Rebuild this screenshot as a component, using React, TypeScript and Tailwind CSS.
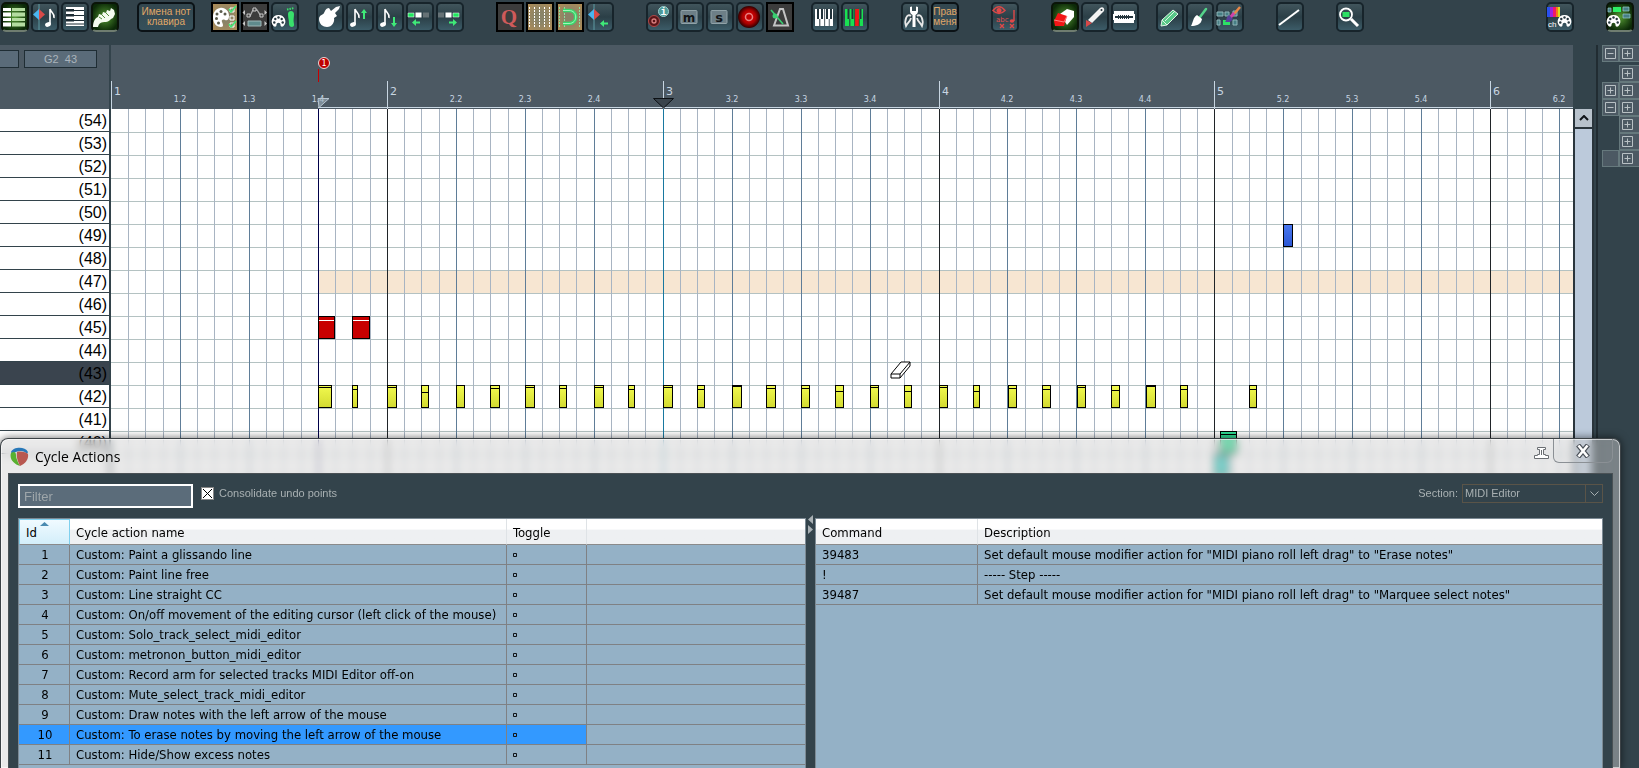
import { ReactNode } from "react"
import clsx from "clsx"

type Tone = "plain" | "green" | "amber" | "dark"

const tones: Record<Tone, string> = {
    plain: "rounded-[5px] border-[#17242b] bg-linear-to-b from-[#41555c] via-[#2b3f47] to-[#3c5c68]",
    green: "rounded-[5px] border-[#0a1408] border-b-[#6f7d70] bg-radial from-[#569c34] to-[#0c2a08] to-80%",
    amber: "border-black bg-radial from-[#8a8468] from-30% to-[#b08c54]",
    dark: "border-black bg-[#3c3c3c]",
}

const Tool = ({ label, tone = "plain", children }: { label: string, tone?: Tone, children: ReactNode }) => (
    <button aria-label={label} className={clsx("relative mx-px h-[30px] w-7 shrink-0 border-2", tones[tone])}>
        <svg className=" absolute -inset-0.5 h-[30px] w-7 overflow-visible " viewBox="1 2 28 30">{children}</svg>
    </button>
)

const TextTool = ({ children, className }: { children: ReactNode, className: string }) => (
    <button className={clsx("mx-px h-[30px] shrink-0 rounded-[5px] border-2 border-[#0b1216] bg-linear-to-b from-[#33474f] to-[#36505a] text-center font-['Liberation_Sans'] text-[10px] leading-[10px] whitespace-nowrap text-[#e0a868]", className)}>
        {children}
    </button>
)

const Palette = ({ x, y, s = 1 }: { x: number, y: number, s?: number }) => (
    <g transform={`translate(${x} ${y}) scale(${s})`}>
        <path fill="#fff" d="M7 0C2 1 0 5 0 9c0 6 3 10 8 10 3 0 2-3 1-5s1-3 3-2 4 0 4-4c0-5-4-9-9-8Z" />
        <g fill="#5b5b4c">
            <circle cx="4" cy="6" r="1.5" /><circle cx="8" cy="3.500" r="1.500" /><circle cx="12" cy="6" r="1.500" />
            <circle cx="3.500" cy="10.500" r="1.500" /><circle cx="5.500" cy="15" r="1.500" />
        </g>
    </g>
)

// round palette with the holes set in a ring
const Wheel = ({ x, y }: { x: number, y: number }) => (
    <g transform={`translate(${x} ${y})`}>
        <path fill="#fff" d="M6.500 0a6.500 6.500 0 0 1 5 11c-1 1-3 1-3-1 0-3-4-3-4 0 0 2-2 2-3 1a6.500 6.500 0 0 1 5-11Z" />
        <g fill="#26363e">
            <circle cx="6.500" cy="2.500" r="1.200" /><circle cx="3.300" cy="4" r="1.200" /><circle cx="9.700" cy="4" r="1.200" />
            <circle cx="2.300" cy="7.500" r="1.200" /><circle cx="10.700" cy="7.500" r="1.200" />
        </g>
    </g>
)

const EighthNote = ({ x = 0 }: { x?: number }) => (
    <g transform={`translate(${x} 0)`}>
        <path d="M8 9v15M8 9c1 4 5 4 4 9" fill="none" stroke="#fff" strokeWidth="1.600" />
        <ellipse cx="6" cy="24.500" rx="3" ry="2.200" fill="#fff" transform="rotate(-20 6 24.500)" />
    </g>
)

const Diamond = ({ x }: { x: number }) => (
    <g>
        <path d={`M${x} 4v26`} stroke="#5f9ba3" />
        <path d={`M${x} 9v11l-6-5.500Z`} fill="#4ab4f0" />
        <path d={`M${x} 9v11l6-5.500Z`} fill="#d84a48" />
    </g>
)

const GREEN = "#3fea78"

const ArrowLeft = ({ x, y }: { x: number, y: number }) => (
    <path transform={`translate(${x} ${y})`} fill={GREEN} d="M0 3.500 4 0v2.500h4v2H4V7Z" />
)
const ArrowRight = ({ x, y }: { x: number, y: number }) => (
    <path transform={`translate(${x} ${y})`} fill={GREEN} d="M8 3.500 4 0v2.500H0v2h4V7Z" />
)

const Toolbar = () => (
    <div className=" flex h-[45px] w-full pt-0.5 ">
        <Tool label="Piano roll view" tone="green">
            <path fill="#fff" d="M3 8h8v3H3zM3 12.500h8v4H3zM3 18h8v3H3zM3 22.500h8v4H3z" />
            <path fill="#b4dca0" d="M12 8h13v3H12zM12 12.500h13v4H12zM12 18h13v3H12zM12 22.500h13v4H12z" />
        </Tool>
        <Tool label="Cursor and note"><Diamond x={9} /><EighthNote x={12} /></Tool>
        <Tool label="Keys">
            <path fill="#fff" d="M6 7h18v19H6z" />
            <path fill="#1c2b33" d="M6 9h8v2.500H6zM6 14h8v2.500H6zM6 19h8v2.500H6zM14 10h10v1H14zM14 15h10v1H14zM14 20h10v1H14zM6 23.500h18v1H6z" />
        </Tool>
        <Tool label="Guitar neck" tone="green">
            <path fill="#f4fbef" d="M3 27c0-5 2-9 5-10l1-3 3 1 1-3 3 1 1-3 3 1 1-3 3 2 1 4-2 4c-3 1-4 4-7 4-5 0-7 1-8 5Z" />
            <path stroke="#4f8a38" d="m9 17 3 2m0-4 3 3m1-5 3 3" />
        </Tool>
        <TextTool className="ml-[17px] w-[58px]">Имена нот<br />клавира</TextTool>
        <div className=" flex pl-[14px] ">
            <Tool label="Colour list" tone="amber">
                <Palette x={3} y={8} />
                <g fill="none" stroke="#fff"><path d="M20 8h4v4h-4zM20 16h4v4h-4zM20 23h4v4h-4z" /></g>
                <path d="m19 9 2 3 5-6M19 24l2 3 5-6" fill="none" stroke={GREEN} strokeWidth="1.500" />
            </Tool>
            <Tool label="Envelope" tone="dark">
                <path d="M7 16h3l3-6h4l4 6h2" fill="none" stroke="#aaa" strokeWidth="1.300" />
                <path fill="#3c3c3c" stroke="#c8c8c8" d="M13 8h3v3h-3zM7 14h3v3H7zM20 14h3v3h-3z" />
                <path fill="#5f8a8c" stroke="#9fb5b5" d="M8 21h13v5H8z" />
                <path fill="#c8c8c8" d="M5 10v5l-2.500-2.500ZM24.500 10v5l2.500-2.500ZM5 21v5l-2.500-2.500ZM24.500 21v5l2.500-2.500Z" />
            </Tool>
            <Tool label="Colour step">
                <Wheel x={2} y={15} />
                <path fill="#39e06c" d="M18 14c0-4 6-4 6 0 0 4-1 6 0 10s-5 4-5 0c0-4-1-6-1-10Z" />
                <path stroke="#39e06c" strokeWidth="2" strokeDasharray="1.500 1" d="M17 9.500 24 8" />
            </Tool>
        </div>
        <div className=" flex pl-[15px] ">
            <Tool label="Guitar">
                <path fill="#fff" d="M4 19c0-4 4-4 5-6s2-5 5-5l2 3 5-4 4-1-1 3-4 4 2 3-3 2c1 4-2 9-7 9-4 0-8-3-8-8Z" />
            </Tool>
            <Tool label="Note up"><EighthNote x={2} /><path fill={GREEN} d="m19 9 3 4h-2v6h-2v-6h-2Z" /></Tool>
            <Tool label="Note down"><EighthNote x={2} /><path fill={GREEN} d="m19 27-3-4h2v-6h2v6h2Z" /></Tool>
            <Tool label="Shift left">
                <path fill="#20e860" stroke="#fff" strokeWidth=".5" d="M3 13h6v4H3z" /><path fill="#fff" d="M10.500 12.500h6v5h-6z" /><path fill="#667276" d="M18 12.500h6v5h-6z" />
                <ArrowLeft x={7} y={19} />
            </Tool>
            <Tool label="Shift right">
                <path fill="#667276" d="M3 12.500h6v5H3z" /><path fill="#fff" d="M10.500 12.500h6v5h-6z" /><path fill="#20e860" stroke="#fff" strokeWidth=".5" d="M18 13h6v4h-6z" />
                <ArrowRight x={14} y={19} />
            </Tool>
        </div>
        <div className=" flex pl-[30px] ">
            <Tool label="Quantize" tone="dark">
                <text x="14" y="24" textAnchor="middle" fontFamily="Liberation Serif" fontWeight="bold" fontSize="21" fill="#cf5a5a">Q</text>
            </Tool>
            <Tool label="Show grid" tone="amber">
                <path stroke="#fff" strokeDasharray="2 1" d="M4.500 7v20M9.500 7v20M14.500 7v20M19.500 7v20M24.500 7v20" />
            </Tool>
            <Tool label="Snap" tone="amber">
                <path stroke="#8fe0a0" strokeDasharray="2 1" d="M4.500 7v20M9.500 7v20M24.500 7v20" />
                <path d="M8 10.500h6c9 0 9 13 0 13H8" fill="none" stroke="#36d96a" strokeWidth="3.500" />
                <path d="M8 10.500h6c9 0 9 13 0 13H8" fill="none" stroke="#a5f5ba" />
            </Tool>
            <Tool label="Move to cursor"><Diamond x={9} /><ArrowLeft x={15} y={20} /></Tool>
        </div>
        <div className=" flex pl-[30px] ">
            <Tool label="Arm info">
                <circle cx="9" cy="21" r="5.500" fill="#5a1518" stroke="#b04848" /><circle cx="9" cy="21" r="2" fill="none" stroke="#d98080" strokeWidth="1.300" />
                <circle cx="18.500" cy="11.500" r="5" fill="#4d9a98" stroke="#9bd0ce" />
                <text x="18.500" y="15" textAnchor="middle" fontFamily="Liberation Mono" fontWeight="bold" fontSize="10" fill="#fff">i</text>
            </Tool>
            <Tool label="Mute">
                <rect x="6" y="10.500" width="16" height="13" rx="1" fill="#6d7f87" stroke="#90a2a8" />
                <text x="14" y="22" textAnchor="middle" fontFamily="DejaVu Sans" fontWeight="bold" fontSize="12" fill="#101518">m</text>
            </Tool>
            <Tool label="Solo">
                <rect x="6" y="10.500" width="16" height="13" rx="1" fill="#6d7f87" stroke="#90a2a8" />
                <text x="14" y="22" textAnchor="middle" fontFamily="DejaVu Sans" fontWeight="bold" fontSize="13" fill="#101518">s</text>
            </Tool>
            <Tool label="Record">
                <defs>
                    <radialGradient id="rec"><stop stopColor="#e80808" /><stop offset=".6" stopColor="#b00000" /><stop offset="1" stopColor="#300000" /></radialGradient>
                </defs>
                <circle cx="14" cy="17" r="11" fill="url(#rec)" />
                <circle cx="14" cy="17" r="3.500" fill="#c00000" stroke="#e88080" strokeWidth="1.500" />
            </Tool>
            <Tool label="Metronome" tone="dark">
                <path d="M9 25.500 15 9h3l5 16.500Z" fill="none" stroke="#c4c4c4" strokeWidth="2" />
                <path d="m6 10 12 14" stroke="#39d070" strokeWidth="1.600" /><circle cx="10" cy="16" r="2.500" fill="#39d070" />
            </Tool>
        </div>
        <div className=" flex pl-[15px] ">
            <Tool label="Keyboard">
                <path fill="#fff" d="M5 9h18v17H5z" />
                <path fill="#22333b" d="M7 9h2v10H7zM11 9h2v10h-2zM16 9h2v10h-2zM20 9h2v10h-2zM9.300 19h1v7h-1zM14.300 9h.8v17h-.8zM18.800 19h.8v7h-.8z" />
            </Tool>
            <Tool label="Coloured keyboard">
                <path fill="#19e052" d="M5 9h18v17H5z" /><path fill="#f01818" d="M15 9h4v17h-4z" />
                <path fill="#22333b" d="M7.500 9h2v10h-2zM11.500 9h2v10h-2zM19.500 9h2v10h-2zM9.300 19h1v7h-1zM14.300 9h.8v17h-.8zM18.800 19h.8v7h-.8z" />
            </Tool>
        </div>
        <div className=" flex pl-[30px] ">
            <Tool label="Options">
                <path fill="#fff" d="M10 7v4c0 2 1 3 2.500 4v12h3V15c1.500-1 2.500-2 2.500-4V7l-2-.5V11h-4V6.500Z" />
                <path fill="none" stroke="#e8e8e8" strokeWidth="1.800" d="M11 16c-4-3-7 4-5 10 2-4 4-4 5-8m6-2c4-3 7 4 5 10-2-4-4-4-5-8" />
            </Tool>
            <TextTool className="w-7">Прав<br />меня</TextTool>
        </div>
        <div className=" flex pl-[30px] ">
            <Tool label="Hide names">
                <path d="M3 10.500c4-5 8-5 12 0-4 4-8 4-12 0Z" fill="none" stroke="#d84848" strokeWidth="1.500" /><circle cx="9" cy="10.500" r="2.500" fill="#e04848" />
                <text x="6" y="22" fontFamily="DejaVu Sans" fontSize="7" fill="#e05050">abc</text>
                <path d="M24 10v11m-14 3 4 4m0-4-4 4m10-4 4 4m0-4-4 4" stroke="#e04848" strokeWidth="1.400" /><ellipse cx="22" cy="21" rx="2.300" ry="1.700" fill="#e04848" />
            </Tool>
        </div>
        <div className=" flex pl-[30px] ">
            <Tool label="Eraser" tone="green">
                <path fill="#fff" d="m10 14 7-5 7 2v6l-7 8Z" /><path fill="#f21616" d="m8 13 9 3-3 10H5l-1-5Z" /><path stroke="#ff8080" d="m4 20 10 2 3-6" fill="none" />
            </Tool>
            <Tool label="Knife">
                <path fill="#f3f3f3" d="M8 20 20 8c3-2 5 1 4 3L12 23Z" /><path fill="#d84848" d="m6 20 6 3-6 4Z" /><circle cx="21.500" cy="10" r="1" fill="#26363e" />
            </Tool>
            <Tool label="Razor">
                <path fill="#fff" d="M4 11h20v3h1v6h-1v3H4v-3H3v-6h1Z" />
                <path stroke="#26363e" strokeWidth="2" d="M5 17h18" /><path stroke="#26363e" strokeWidth="4" strokeDasharray="1 1" d="M8 17h12" />
            </Tool>
        </div>
        <div className=" flex pl-[15px] ">
            <Tool label="Pencil">
                <path fill="#58c888" stroke="#dff5e6" d="m7 20 11-10 5 4-11 11-6 1Z" /><path stroke="#dff5e6" d="m10 21 10-10M7 20l5 5" />
            </Tool>
            <Tool label="Brush">
                <path d="m15 17 6-8" stroke="#54d48a" strokeWidth="2.500" strokeLinecap="round" /><path fill="#fff" d="m12 15 5 4c-1 6-6 7-11 7 2-3 2-9 6-11Z" />
            </Tool>
            <Tool label="Paint notes">
                <path fill="#477f85" stroke="#8fb5b8" d="M2 12h6v4H2zM10 12h4v4h-4zM18 11h4v5h-4zM2 20h3v5H2zM18 20h4v5h-4z" /><path fill="#2de065" d="M8 20h7v5H8z" />
                <path d="m19 14 6-7" stroke="#e88848" strokeWidth="2.500" /><path d="m15 18 4-5" stroke="#d040a8" strokeWidth="3" /><path fill="#584098" d="m14 15 4 4c-2 4-5 3-8 3 2-2 1-5 4-7Z" />
            </Tool>
        </div>
        <div className=" flex pl-[30px] ">
            <Tool label="Line"><path d="M4 25 24 10" stroke="#fff" strokeWidth="2" /></Tool>
        </div>
        <div className=" flex pl-[30px] ">
            <Tool label="Zoom">
                <circle cx="11" cy="14.500" r="6" fill="none" stroke="#fff" strokeWidth="1.800" /><path fill="#2de065" d="M7.500 12h7v5h-7z" /><path d="m16 19 7 7" stroke="#fff" strokeWidth="3" />
            </Tool>
        </div>
        <div className=" ml-auto flex gap-[30px] pr-1 ">
            <Tool label="Channel colours">
                <path fill="#2a50f0" d="M2 7h4v10H2z" /><path fill="#a020e0" d="M5 7h3v10H5z" /><path fill="#f01868" d="M8 7h3v10H8z" /><path fill="#f87818" d="M11 7h3v10h-3z" /><path fill="#d8e020" d="M13 7h2v10h-2z" />
                <Wheel x={13} y={15} />
                <text x="3" y="27" fontFamily="Liberation Sans" fontSize="8" fill="#fff">ch</text>
            </Tool>
            <Tool label="Track colours" tone="green">
                <path fill="#477f85" stroke="#9cc" strokeWidth=".7" d="M3 8h3v4H3zM18 7h6v4h-6zM18 14h7v4h-7z" /><path fill="#2df065" d="M8 7h8v5H8z" />
                <Wheel x={2} y={15} />
            </Tool>
        </div>
    </div>
)

const STEP = 17.24
const ROW = 23
const START = 207

const xAt = (i: number) => Math.round(i * STEP)

const ticks = Array.from({ length: 140 }, (_, i) => i)

const labelled = ticks.filter(i => i % 4 === 0 && i < 85)

const Ruler = () => (
    <svg className=" block h-16 w-full bg-[#4c5963] font-['DejaVu_Sans'] " shapeRendering="crispEdges">
        {labelled.map(i => {
            const measure = i / 16 + 1
            if (i % 16 === 0) {
                return (
                    <g key={i}>
                        <path d={`M${xAt(i) + 0.5} 36v28`} stroke="#c8d6e2" />
                        <text x={xAt(i) + 3} y="50" fontSize="11" fill="#c8d6e2">{measure}</text>
                    </g>
                )
            }
            return (
                <text key={i} x={xAt(i)} y="57" fontSize="8" textAnchor="middle" fill="#c8d6e2">
                    {`${Math.floor(measure)}.${(i % 16) / 4 + 1}`}
                </text>
            )
        })}
        <path d={`M${START} 62.500H3000`} stroke="#c8d6e2" />
        <path d={`M${START + 0.5} 24v13`} stroke="#c80000" />
        <g shapeRendering="auto">
            <path d={`M${START} 53.500h11l-10 9Z`} fill="#9fb0bd" fillOpacity=".6" stroke="#b8c6d2" />
            <circle cx={START + 6} cy="18" r="5.500" fill="#c00000" stroke="#e8d8d8" />
            <path d="M542.500 53.500h20l-10 9.500Z" fill="#3a444c" stroke="#0c1014" />
        </g>
        <text x={START + 6} y="21" fontSize="8" textAnchor="middle" fill="#fff">1</text>
    </svg>
)

// [length, velocity line offset] for every eighth from the loop start
const hats = [
    [14, 2], [6, 4], [10, 2], [8, 7], [9, 0], [10, 3], [10, 2], [8, 3], [10, 2], [7, 4],
    [10, 2], [8, 4], [10, 1], [10, 3], [9, 3], [9, 6], [9, 2], [8, 6], [9, 2], [7, 6],
    [9, 3], [9, 4], [9, 2], [9, 5], [10, 1], [8, 4], null, [8, 4],
]

type NoteProps = { x: number, row: number, w: number, vel: number, fill: string, line?: string }

const Note = ({ x, row, w, vel, fill, line = "#000" }: NoteProps) => (
    <g transform={`translate(${x} ${row * ROW})`}>
        <rect x=".5" y=".5" width={w - 1} height="22" fill={fill} stroke="#000" />
        <path d={`M1 ${vel + 0.5}h${w - 2}`} stroke={line} />
    </g>
)

const Grid = () => (
    <svg className=" block h-full w-full bg-white " shapeRendering="crispEdges">
        <defs>
            <linearGradient id="yellow" x2="0" y2="1"><stop stopColor="#f2fa50" /><stop offset="1" stopColor="#d2da30" /></linearGradient>
            <linearGradient id="blue" x2="0" y2="1"><stop stopColor="#4a78f0" /><stop offset="1" stopColor="#2c58d4" /></linearGradient>
        </defs>
        <rect x={START} y={7 * ROW} width="3000" height={ROW} fill="#f7e6d2" />
        {Array.from({ length: 40 }, (_, r) => (
            <path key={r} d={`M0 ${(r + 1) * ROW + 0.5}H3000`} stroke="#b4c2c2" />
        ))}
        {ticks.slice(1).map(i => (
            <path key={i} d={`M${xAt(i) + 0.5} 0v900`} stroke={i % 16 === 0 ? "#202428" : i % 4 === 0 ? "#5f7d98" : "#a8b4c2"} />
        ))}
        <path d={`M${START + 0.5} 0v900`} stroke="#00004a" />
        <path d={`M${xAt(32) + 0.5} 0v900`} stroke="#1878a0" />
        <Note x={1172} row={5} w={10} vel={0} fill="url(#blue)" />
        <Note x={START} row={9} w={17} vel={4} fill="#c80000" line="#fff" />
        <Note x={START + 34} row={9} w={18} vel={4} fill="#c80000" line="#fff" />
        {hats.map((hat, k) => hat && (
            <Note key={k} x={START + xAt(k * 2)} row={12} w={hat[0]} vel={hat[1]} fill="url(#yellow)" />
        ))}
        <Note x={1109} row={14} w={17} vel={3} fill="#30dc94" />
        <Note x={1103} row={15} w={15} vel={0} fill="#30d0c4" />
        <path d="m780 265 10-12h9v4l-10 12h-9ZM780 265h9v4m0-4 10-12" fill="#fff" stroke="#000" shapeRendering="auto" />
    </svg>
)

const Keys = () => (
    <div className=" flex w-[109px] shrink-0 flex-col ">
        <div className=" flex h-16 shrink-0 gap-[5px] bg-[#4c5963] pt-[5px] font-['Liberation_Sans'] text-[11px] text-[#aab4bc] ">
            <div className=" h-[18px] w-[19px] border border-l-0 border-[#1f2d34] bg-[#5a6b79] " />
            <div className=" flex h-[18px] w-[73px] items-center justify-center border border-[#1f2d34] bg-[#5a6b79] whitespace-pre ">G2  43</div>
        </div>
        <ul className=" font-['Liberation_Sans'] text-base leading-5 ">
            {Array.from({ length: 15 }, (_, i) => 54 - i).map(n => (
                <li key={n} className={clsx("h-[23px] border-b border-[#33434b] pt-0.5 pr-0.5 text-right text-black", n === 43 ? "bg-[#3a444e]" : "bg-white")}>
                    ({n})
                </li>
            ))}
        </ul>
        <div className=" flex-1 bg-white " />
    </div>
)

const tracks = ["-+", " +", "++", "-+", " +", " +", "#+"]

const TreeBox = ({ sign }: { sign: string }) => (
    <svg className=" size-[11px] " viewBox="0 0 11 11" fill="none" stroke="#b8c0c4">
        <path d={sign === "+" ? "M.5.500h10v10H.500ZM2.500 5.500h6M5.500 2.500v6" : "M.5.500h10v10H.500ZM2.500 5.500h6"} />
    </svg>
)

const TrackPanel = () => (
    <div className=" ml-0.5 flex w-[43px] shrink-0 flex-col border-l-2 border-[#212c32] pl-1 ">
        {tracks.map((t, i) => (
            <div key={i} className={clsx("flex h-[17px]", i === 0 && "mb-[3px]")}>
                <div className={clsx("flex w-[17px] items-center justify-center", t[0] !== " " && "border border-[#66797d] bg-[#4c5963]")}>
                    {(t[0] === "+" || t[0] === "-") && <TreeBox sign={t[0]} />}
                </div>
                <div className=" flex flex-1 items-center border border-r-0 border-[#66797d] bg-[#4c5963] pl-0.5 "><TreeBox sign={t[1]} /></div>
            </div>
        ))}
    </div>
)

const cycleActions = [
    "Custom: Paint a glissando line",
    "Custom: Paint line free",
    "Custom: Line straight CC",
    "Custom: On/off movement of the editing cursor (left click of the mouse)",
    "Custom: Solo_track_select_midi_editor",
    "Custom: metronon_button_midi_editor",
    "Custom: Record arm for selected tracks MIDI Editor off-on",
    "Custom: Mute_select_track_midi_editor",
    "Custom: Draw notes with the left arrow of the mouse",
    "Custom: To erase notes by moving the left arrow of the mouse",
    "Custom: Hide/Show excess notes",
]

const commands = [
    ["39483", "Set default mouse modifier action for \"MIDI piano roll left drag\" to \"Erase notes\""],
    ["!", "----- Step -----"],
    ["39487", "Set default mouse modifier action for \"MIDI piano roll left drag\" to \"Marquee select notes\""],
]

const head = "h-[26px] border-b border-[#8a8a8a] bg-linear-to-b from-white from-40% to-[#eef0f2] to-45% pt-0.5 pl-1.5 text-left font-normal"
const cell = "h-5 border-b border-[#7f8184] pl-1.5"

const CycleActions = () => (
    <section className=" absolute top-[438px] right-[18px] bottom-0 left-0 flex flex-col rounded-t-lg border border-b-0 border-[#3c4246] bg-[#d0d0d0]/45 px-[7px] shadow-[0_0_8px_rgba(0,0,0,0.6),inset_0_0_0_1px_rgba(255,255,255,0.6)] backdrop-blur-xs ">
        <div className=" flex h-[34px] shrink-0 items-start ">
            <svg className=" mt-2 ml-0.5 size-[19px] " viewBox="0 0 19 19">
                <path fill="#2878b8" d="M1 5C3 0 15-1 18 5l-1 2C14 3 8 3 2 7Z" />
                <path fill="#58b030" d="M1 6c3-2 5-1 5 2 0 4 2 7 4 11C4 17-1 12 1 6Z" />
                <path fill="#b85850" d="M7 5c4-1 9 0 11 2 1 5-3 10-8 12C8 15 6 10 7 5Z" />
            </svg>
            <h1 className=" mt-1.5 ml-1.5 font-['Open_Sans'] text-sm leading-6 text-black ">Cycle Actions</h1>
            <button aria-label="Pin" className=" mt-2 ml-auto ">
                <svg className=" h-3 w-[15px] " viewBox="0 0 15 12" fill="#fff" stroke="#6a6e72"><path d="M3.500.500h8v2h-2v5h2v1h3v3h-14v-3h3v-1h2v-5h-2Z" /><path d="M7.500 3v5" /></svg>
            </button>
            <button aria-label="Close" className=" ml-1 flex h-6 w-[60px] items-center justify-center rounded-b-md border border-t-0 border-[#8b9095] ">
                <svg className=" h-[14px] w-4 " viewBox="0 0 16 14"><path d="m3 1 10 12M13 1 3 13" stroke="#4a5058" strokeWidth="5" /><path d="m3.500 1.500 9 11m0-11-9 11" stroke="#fff" strokeWidth="2.600" /></svg>
            </button>
        </div>
        <div className=" flex min-h-0 flex-1 flex-col border border-b-0 border-[#4a5155] bg-[#33434b] px-[9px] pt-[9px] font-['Liberation_Sans'] text-[11px] text-[#a8b0b2] ">
            <div className=" flex h-[35px] shrink-0 items-start ">
                <input aria-label="Filter" placeholder="Filter" className=" mt-px h-6 w-[175px] border-2 border-white bg-[#5b6c7a] px-1 text-[13px] outline-none placeholder:text-[#9ea6aa] " />
                <label className=" mt-px ml-2 flex h-[18px] items-center gap-[5px] ">
                    <span className=" grid ">
                        <input type="checkbox" defaultChecked className=" col-start-1 row-start-1 size-[13px] appearance-none border border-[#888] bg-white " />
                        <svg className=" pointer-events-none col-start-1 row-start-1 size-[13px] " viewBox="0 0 13 13"><path d="m2 2 9 9m0-9-9 9" stroke="#000" /></svg>
                    </span>
                    Consolidate undo points
                </label>
                <label className=" mt-px ml-auto flex h-[19px] items-center gap-1 ">
                    Section:
                    <span className=" grid ">
                        <select className=" col-start-1 row-start-1 h-[19px] w-[141px] appearance-none border border-[#5a5448] pl-0.5 outline-none ">
                            <option>MIDI Editor</option>
                        </select>
                        <span className=" pointer-events-none col-start-1 row-start-1 flex w-[18px] items-center justify-center self-stretch justify-self-end border-l border-[#5a5448] ">
                            <svg className=" h-[5px] w-[9px] " viewBox="0 0 9 5" fill="none" stroke="#a8b0b2"><path d="m.5.500 4 4 4-4" /></svg>
                        </span>
                    </span>
                </label>
            </div>
            <div className=" flex min-h-0 flex-1 font-['DejaVu_Sans_Condensed'] text-[13px] leading-4 text-black ">
                <div className=" min-w-0 flex-1 overflow-hidden border-x border-t border-[#7c8a94] bg-[#94b1c6] ">
                    <table className=" w-full table-fixed border-separate border-spacing-0 ">
                        <colgroup><col className="w-[51px]" /><col className="w-[436px]" /><col className="w-20" /><col /></colgroup>
                        <thead>
                            <tr>
                                <th className=" relative h-[26px] border border-[#7fd0ee] border-b-[#8a8a8a] bg-linear-to-b from-[#f0faff] to-[#d3eefa] pt-0.5 pl-1.5 text-left font-normal ">
                                    Id
                                    <svg className=" absolute top-0.5 left-5 h-1 w-[9px] " viewBox="0 0 9 4"><path d="m0 4 4.500-4L9 4Z" fill="#4a8ab0" /></svg>
                                </th>
                                <th className={head}>Cycle action name</th>
                                <th className={clsx(head, "border-l border-l-[#dfe3e6]")}>Toggle</th>
                                <th className={clsx(head, "border-l border-l-[#dfe3e6]")} />
                            </tr>
                        </thead>
                        <tbody>
                            {cycleActions.map((name, i) => {
                                const on = i === 9 && "bg-[#3399ff]"
                                return (
                                    <tr key={i}>
                                        <td className={clsx("h-5 border-r border-b border-[#7f8184] pl-0.5 text-center", on)}>{i + 1}</td>
                                        <td className={clsx(cell, "whitespace-nowrap", on)}>{name}</td>
                                        <td className={clsx(cell, "border-l", on)}>
                                            <svg className=" size-1 " viewBox="0 0 4 4" fill="none" stroke="#101418"><path d="M.5.500h3v3H.500Z" /></svg>
                                        </td>
                                        <td className={clsx(cell, "border-l")} />
                                    </tr>
                                )
                            })}
                        </tbody>
                    </table>
                </div>
                <div className=" flex w-[9px] shrink-0 flex-col items-center ">
                    <svg className=" h-[22px] w-[5px] overflow-visible " viewBox="0 0 5 22" fill="#a8b0b4"><path d="M5-3v9L0 1.500ZM0 7v9l5-4.500Z" /></svg>
                </div>
                <div className=" min-w-0 flex-1 overflow-hidden border-x border-t border-[#7c8a94] bg-[#94b1c6] ">
                    <table className=" w-full table-fixed border-separate border-spacing-0 ">
                        <colgroup><col className="w-[161px]" /><col /></colgroup>
                        <thead>
                            <tr>
                                <th className={head}>Command</th>
                                <th className={clsx(head, "border-l border-l-[#dfe3e6]")}>Description</th>
                            </tr>
                        </thead>
                        <tbody>
                            {commands.map(([id, text]) => (
                                <tr key={id}>
                                    <td className={cell}>{id}</td>
                                    <td className={clsx(cell, "border-l whitespace-nowrap")}>{text}</td>
                                </tr>
                            ))}
                        </tbody>
                    </table>
                </div>
            </div>
        </div>
    </section>
)

const App = () => {
    return (
        <main className=" relative flex h-screen w-full flex-col overflow-hidden bg-[#33434b] ">
            <Toolbar />
            <div className=" flex min-h-0 flex-1 overflow-hidden ">
                <Keys />
                <div className=" w-0.5 shrink-0 bg-[#33434b] " />
                <div className=" flex min-w-0 flex-1 flex-col ">
                    <Ruler />
                    <div className=" min-h-0 flex-1 "><Grid /></div>
                </div>
                <div className=" w-[21px] shrink-0 pt-16 ">
                    <div className=" h-full border-x-2 border-[#2a353c] bg-[#bccadb] ">
                        <button aria-label="Scroll up" className=" flex h-5 w-full items-center justify-center border-b-2 border-[#2a353c] bg-[#b8c2cc] ">
                            <svg className=" h-1.5 w-2.5 " viewBox="0 0 10 6" fill="none" stroke="#101418" strokeWidth="2"><path d="m1 5 4-4 4 4" /></svg>
                        </button>
                    </div>
                </div>
                <TrackPanel />
            </div>
            <CycleActions />
        </main>
    )
}

export default App
